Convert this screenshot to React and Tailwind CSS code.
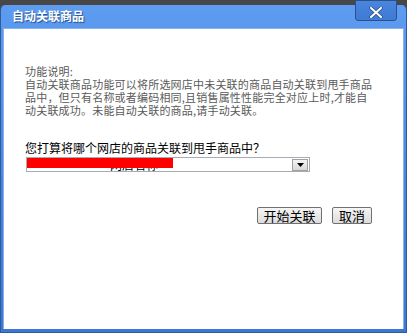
import React from 'react';

const font = { fontFamily: '"Noto Sans CJK SC", "Liberation Sans", sans-serif' };

const descLines = [
  '功能说明:',
  '自动关联商品功能可以将所选网店中未关联的商品自动关联到甩手商品',
  '品中，但只有名称或者编码相同,且销售属性性能完全对应上时,才能自',
  '动关联成功。未能自动关联的商品,请手动关联。',
];

const Button = ({ children, className }) => (
  <button
    className={`h-[17px] rounded-[2px] border border-[#707070] bg-gradient-to-b from-[#f6f6f6] to-[#dcdcdc] text-[13px] leading-[15px] text-black ${className}`}
  >
    {children}
  </button>
);

export default function App() {
  return (
    <div className="w-[407px] h-[333px] bg-[#474747] overflow-hidden" style={font}>
      <div className="mt-[5px] h-[328px] flex flex-col rounded-t-[5px] bg-gradient-to-b from-[#5d9cf0] via-[#4688e4] to-[#3b78d6] border-x border-b border-[#2f5c9c]">
        {/* title bar */}
        <div className="relative h-[23px] shrink-0">
          <span className="absolute left-[11px] top-[4px] text-[12px] leading-[14px] font-bold text-white [text-shadow:1px_1px_1px_#24508f]">
            自动关联商品
          </span>
          <div className="absolute right-[9px] top-[-5px] w-[42px] h-[21px] rounded-b-[3px] border border-[#2a518c] bg-gradient-to-b from-[#4a86dc] to-[#3f7ad3] flex items-center justify-center pt-[4px]">
            <svg width="14" height="11" viewBox="0 0 14 11">
              <path d="M2 1 L12 10 M12 1 L2 10" stroke="#2d4f86" strokeWidth="3.6" strokeLinecap="round" />
              <path d="M2 1 L12 10 M12 1 L2 10" stroke="#ffffff" strokeWidth="2" strokeLinecap="round" />
            </svg>
          </div>
        </div>
        {/* body */}
        <div className="flex-1 mx-[2px] mb-[3px] bg-white border-t border-[#2f65b5] border-x border-[#8ab2e8] pt-[36px] pl-[21px] pr-[31px]">
          <div className="text-[11px] leading-[13px] tracking-[0.2px] text-[#5a5a5a] whitespace-nowrap">
            {descLines.map((l) => (
              <div key={l}>{l}</div>
            ))}
          </div>
          <div className="mt-[24px] text-[12px] leading-[14px] text-black whitespace-nowrap">
            您打算将哪个网店的商品关联到甩手商品中？
          </div>
          <div className="relative mt-[2px] ml-[1px] w-[284px] h-[15px] border border-[#a5acb5] bg-white flex items-center justify-end pr-[1px] overflow-hidden">
            <span className="absolute left-[83px] top-[0px] text-[12px] leading-[14px] text-black">
              网店名称
            </span>
            <div className="absolute left-0 top-0 w-[146px] h-[10px] bg-[#ff0000]" />
            <div className="w-[16px] h-[12px] border border-[#a0a0a0] bg-gradient-to-b from-[#f4f4f4] to-[#d8d8d8] flex items-center justify-center">
              <svg width="7" height="4" viewBox="0 0 7 4">
                <path d="M0 0 H7 L3.5 4 Z" fill="#000" />
              </svg>
            </div>
          </div>
          <div className="mt-[35px] flex justify-end gap-[10px]">
            <Button className="w-[65px]">开始关联</Button>
            <Button className="w-[40px]">取消</Button>
          </div>
        </div>
      </div>
    </div>
  );
}
